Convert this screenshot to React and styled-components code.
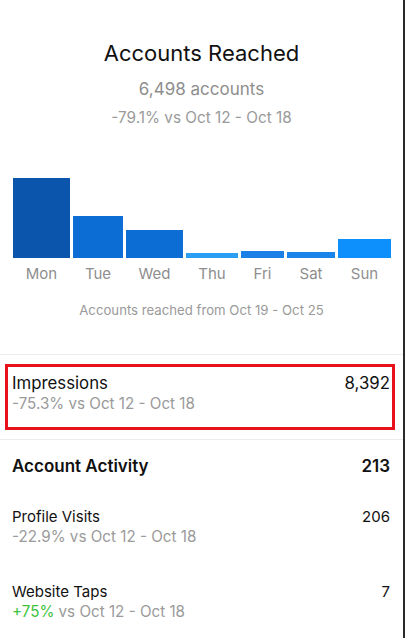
import React from 'react';
import styled, { createGlobalStyle } from 'styled-components';

const GlobalStyle = createGlobalStyle`
  html, body {
    margin: 0;
    padding: 0;
    background: #ffffff;
  }
  body {
    font-family: 'Inter', 'Roboto', 'Liberation Sans', sans-serif;
    -webkit-font-smoothing: antialiased;
  }
`;

const Page = styled.div`
  width: 403px;
  min-height: 638px;
  border-right: 2px solid #2a2a2a;
  background: #ffffff;
  color: #111111;
`;

const Header = styled.div`
  padding-top: 40px;
  text-align: center;
`;

const Title = styled.div`
  font-size: 22px;
  line-height: 26px;
  color: #111111;
`;

const Count = styled.div`
  margin-top: 12px;
  font-size: 17px;
  line-height: 22px;
  color: #8e8e8e;
`;

const Change = styled.div`
  margin-top: 8px;
  font-size: 15.3px;
  line-height: 20px;
  color: #9a9a9a;
`;

const Chart = styled.div`
  margin: 50px 14px 0 13px;
  display: flex;
  gap: 3px;
`;

const Column = styled.div`
  display: flex;
  flex-direction: column;
  align-items: stretch;
  flex: 0 0 ${(p) => p.$w}px;
`;

const BarSlot = styled.div`
  height: 80px;
  display: flex;
  align-items: flex-end;
`;

const Bar = styled.div`
  width: 100%;
  height: ${(p) => p.$h}px;
  background: ${(p) => p.$color};
`;

const DayLabel = styled.div`
  margin-top: 6px;
  text-align: center;
  font-size: 15px;
  line-height: 20px;
  color: #8e8e8e;
`;

const Caption = styled.div`
  margin-top: 17px;
  text-align: center;
  font-size: 13.2px;
  line-height: 18px;
  color: #9a9a9a;
`;

const Divider = styled.div`
  margin-top: ${(p) => p.$top}px;
  height: 1px;
  background: #ececec;
`;

const Highlight = styled.div`
  margin: 9px 8px 0 5px;
  border: 3px solid #e8121a;
  padding: 5px 2px 14px 4px;
`;

const StatRow = styled.div`
  display: flex;
  justify-content: space-between;
  align-items: flex-start;
`;

const StatName = styled.div`
  font-size: ${(p) => p.$size || 15}px;
  line-height: ${(p) => (p.$size > 16 ? 22 : 20)}px;
  font-weight: ${(p) => (p.$bold ? 600 : 400)};
  color: #111111;
`;

const StatValue = styled(StatName)``;

const StatSub = styled.div`
  margin-top: 1px;
  font-size: 15.2px;
  line-height: 18px;
  color: #9a9a9a;
`;

const Up = styled.span`
  color: #3cc43c;
`;

const Section = styled.div`
  padding: 0 13px 0 12px;
`;

const Block = styled.div`
  margin-top: ${(p) => p.$top}px;
`;

const days = [
  { label: 'Mon', w: 57, h: 80, color: '#0b55ad' },
  { label: 'Tue', w: 50, h: 42, color: '#0c6dd5' },
  { label: 'Wed', w: 57, h: 28, color: '#0c6dd5' },
  { label: 'Thu', w: 52, h: 5, color: '#2a9ef2' },
  { label: 'Fri', w: 43, h: 7, color: '#1a80e6' },
  { label: 'Sat', w: 48, h: 6, color: '#1a84ea' },
  { label: 'Sun', w: 53, h: 19, color: '#0d8ffc' },
];

const Stat = ({ name, value, sub, top }) => (
  <Block $top={top}>
    <StatRow>
      <StatName>{name}</StatName>
      <StatValue>{value}</StatValue>
    </StatRow>
    <StatSub>{sub}</StatSub>
  </Block>
);

export default function App() {
  return (
    <Page>
      <GlobalStyle />
      <Header>
        <Title>Accounts Reached</Title>
        <Count>6,498 accounts</Count>
        <Change>-79.1% vs Oct 12 - Oct 18</Change>
      </Header>

      <Chart>
        {days.map((d) => (
          <Column key={d.label} $w={d.w}>
            <BarSlot>
              <Bar $h={d.h} $color={d.color} />
            </BarSlot>
            <DayLabel>{d.label}</DayLabel>
          </Column>
        ))}
      </Chart>
      <Caption>Accounts reached from Oct 19 - Oct 25</Caption>

      <Divider $top={35} />
      <Highlight>
        <StatRow>
          <StatName $size={16.8}>Impressions</StatName>
          <StatValue $size={16.8}>8,392</StatValue>
        </StatRow>
        <StatSub>-75.3% vs Oct 12 - Oct 18</StatSub>
      </Highlight>
      <Divider $top={9} />

      <Section>
        <Block $top={15}>
          <StatRow>
            <StatName $size={17} $bold>Account Activity</StatName>
            <StatValue $size={17} $bold>213</StatValue>
          </StatRow>
        </Block>
        <Stat top={30} name="Profile Visits" value="206" sub="-22.9% vs Oct 12 - Oct 18" />
        <Stat
          top={36}
          name="Website Taps"
          value="7"
          sub={<><Up>+75%</Up> vs Oct 12 - Oct 18</>}
        />
      </Section>
    </Page>
  );
}
